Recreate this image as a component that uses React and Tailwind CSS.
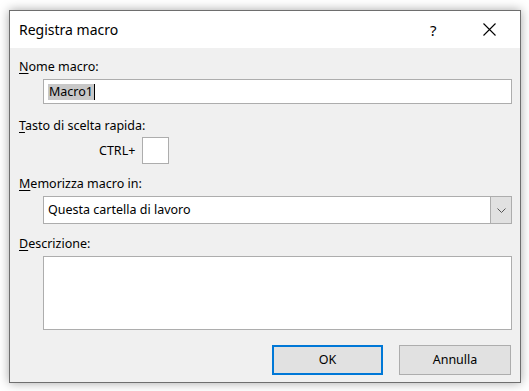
export default function App() {
  return (
    <div className="w-[529px] h-[391px] bg-white pt-[10px] pl-[9px] font-['Noto_Sans',sans-serif] text-black">
      <div className="w-[512px] h-[373px] border border-[#6e6e6e] bg-[#f0f0f0] shadow-[0_0_10px_rgba(0,0,0,0.35)] flex flex-col">
        {/* Title bar */}
        <div className="h-[37px] bg-white flex items-center pl-[9px] shrink-0">
          <span className="text-[14px] leading-[20px] flex-1">Registra macro</span>
          <span className="text-[15px] leading-[20px] w-[10px] mr-[43px]">?</span>
          <svg width="13" height="13" viewBox="0 0 13 13" className="mr-[24px]">
            <path d="M0.5 0.5 L12.5 12.5 M12.5 0.5 L0.5 12.5" stroke="#000" strokeWidth="1.1" fill="none" />
          </svg>
        </div>

        {/* Body */}
        <div className="flex-1 flex flex-col pt-[11px] pl-[9px] pr-[8px] text-[12.5px] leading-[16px]">
          <div>
            <span className="underline underline-offset-2">N</span>ome macro:
          </div>
          <div className="ml-[24px] mt-[4px] h-[25px] border border-[#adadad] bg-white flex items-center pl-[4px]">
            <span className="bg-[#c8c8c8] px-[1px]">Macro1</span>
            <span className="w-px h-[16px] bg-black"></span>
          </div>

          <div className="mt-[14px]">
            <span className="underline underline-offset-2">T</span>asto di scelta rapida:
          </div>
          <div className="mt-[3px] flex items-center">
            <span className="ml-[80px] w-[43px]">CTRL+</span>
            <div className="w-[27px] h-[27px] border border-[#adadad] bg-white"></div>
          </div>

          <div className="mt-[12px]">
            <span className="underline underline-offset-2">M</span>emorizza macro in:
          </div>
          <div className="ml-[24px] mt-[4px] h-[28px] border border-[#adadad] bg-white flex items-stretch">
            <span className="flex-1 flex items-center pl-[4px]">Questa cartella di lavoro</span>
            <div className="w-[21px] bg-[#e1e1e1] border-l border-[#adadad] flex items-center justify-center">
              <svg width="9" height="5" viewBox="0 0 9 5">
                <path d="M0.5 0.5 L4.5 4.5 L8.5 0.5" stroke="#555" strokeWidth="1" fill="none" />
              </svg>
            </div>
          </div>

          <div className="mt-[12px]">
            <span className="underline underline-offset-2">D</span>escrizione:
          </div>
          <div className="ml-[24px] mt-[4px] h-[74px] border border-[#adadad] bg-white"></div>

          <div className="mt-[15px] flex justify-end gap-[16px] pr-[1px]">
            <button className="w-[111px] h-[30px] border-2 border-[#0078d7] bg-[#e1e1e1] text-[12.5px]">OK</button>
            <button className="w-[112px] h-[30px] border border-[#adadad] bg-[#e1e1e1] text-[12.5px]">Annulla</button>
          </div>
        </div>
      </div>
    </div>
  );
}
